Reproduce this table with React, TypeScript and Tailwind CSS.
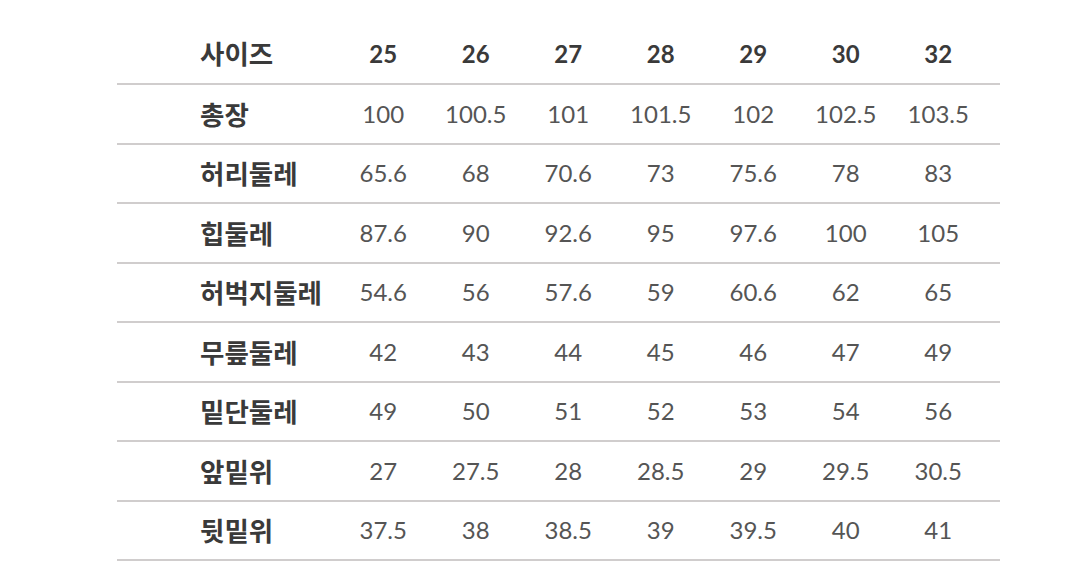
import React from "react";

const sizes = ["25", "26", "27", "28", "29", "30", "32"];
const rows: [string, string[]][] = [
  ["총장", ["100", "100.5", "101", "101.5", "102", "102.5", "103.5"]],
  ["허리둘레", ["65.6", "68", "70.6", "73", "75.6", "78", "83"]],
  ["힙둘레", ["87.6", "90", "92.6", "95", "97.6", "100", "105"]],
  ["허벅지둘레", ["54.6", "56", "57.6", "59", "60.6", "62", "65"]],
  ["무릎둘레", ["42", "43", "44", "45", "46", "47", "49"]],
  ["밑단둘레", ["49", "50", "51", "52", "53", "54", "56"]],
  ["앞밑위", ["27", "27.5", "28", "28.5", "29", "29.5", "30.5"]],
  ["뒷밑위", ["37.5", "38", "38.5", "39", "39.5", "40", "41"]],
];

const kr = { fontFamily: '"Noto Sans CJK KR", "Noto Sans", sans-serif' };
const num = { fontFamily: 'Lato, "Noto Sans", sans-serif' };

export default function App() {
  return (
    <div className="w-[1078px] h-[584px] bg-white overflow-hidden">
      <div className="ml-[117px] w-[883px] pt-[24px]">
        <div className="flex items-center h-[61px] border-b-2 border-[#d0cdcd]">
          <div className="w-[220px] pl-[83px] text-[26.5px] font-bold text-[#3a3a3a] leading-none" style={kr}>
            사이즈
          </div>
          {sizes.map((s) => (
            <div key={s} className="w-[92.5px] text-center text-[24px] font-bold text-[#3a3a3a] leading-none" style={num}>
              {s}
            </div>
          ))}
        </div>
        {rows.map(([label, vals]) => (
          <div key={label} className="flex items-center h-[59.5px] border-b-2 border-[#d0cdcd]">
            <div className="w-[220px] pl-[83px] text-[26.5px] font-bold text-[#3a3a3a] leading-none" style={kr}>
              {label}
            </div>
            {vals.map((v, i) => (
              <div key={i} className="w-[92.5px] text-center text-[24px] text-[#555555] leading-none" style={num}>
                {v}
              </div>
            ))}
          </div>
        ))}
      </div>
    </div>
  );
}
